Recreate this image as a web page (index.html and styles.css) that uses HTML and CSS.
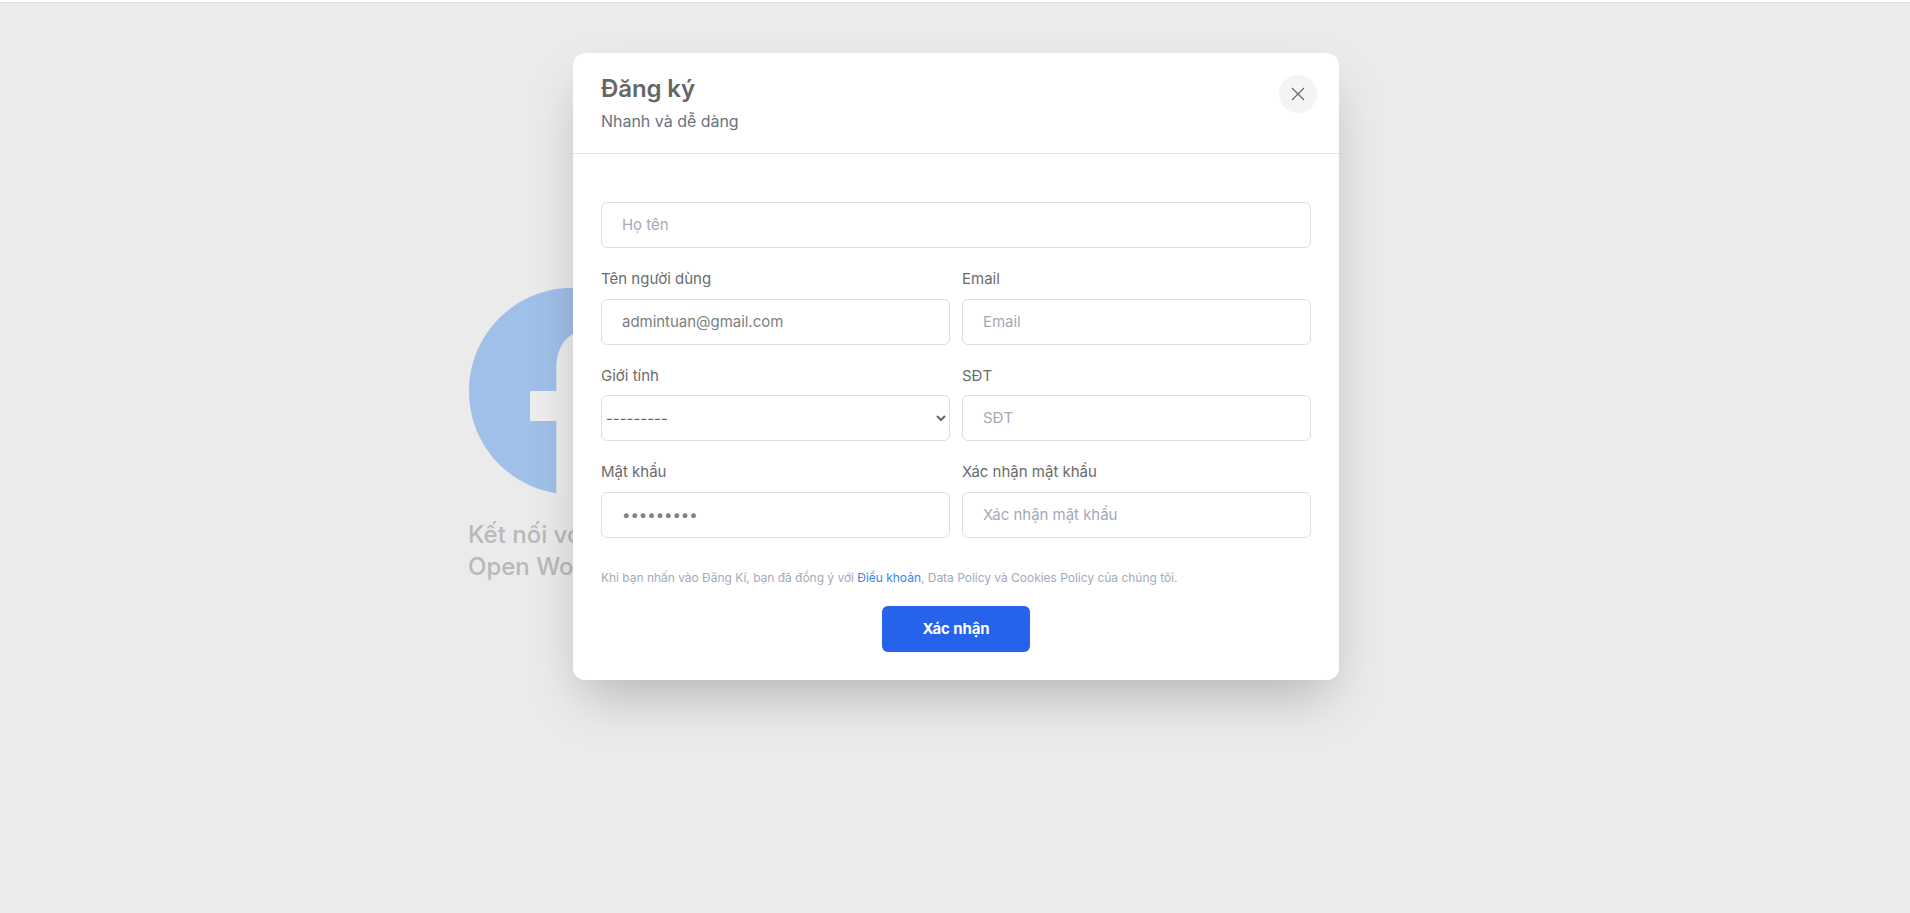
FILE: index.html
```
<!DOCTYPE html>
<html lang="vi">
<head>
<meta charset="utf-8">
<title>Đăng ký</title>
<link rel="stylesheet" href="styles.css">
</head>
<body>
<main class="landing">
  <div class="intro">
    <svg class="logo" viewBox="0 0 24 24" aria-hidden="true">
      <path class="logo-letter" d="M7 12H10V8L14 4L20 6V23.9H10.1V15.6H7z"/>
      <path class="logo-disc" d="M24 12.073c0-6.627-5.373-12-12-12s-12 5.373-12 12c0 5.99 4.388 10.954 10.125 11.854v-8.385H7.078v-3.47h3.047V9.43c0-3.007 1.792-4.669 4.533-4.669 1.312 0 2.686.235 2.686.235v2.953H15.83c-1.491 0-1.956.925-1.956 1.874v2.25h3.328l-.532 3.47h-2.796v8.385C19.612 23.027 24 18.062 24 12.073z"/>
    </svg>
    <p class="tagline">Kết nối với<br>Open World</p>
  </div>
</main>
<div class="overlay">
  <section class="modal">
    <header class="modal-head">
      <div>
        <h1 class="title">Đăng ký</h1>
        <p class="subtitle">Nhanh và dễ dàng</p>
      </div>
      <button class="close" type="button" aria-label="Đóng">
        <svg width="14" height="14" viewBox="0 0 14 14"><path d="M1 1L13 13M13 1L1 13"/></svg>
      </button>
    </header>
    <form class="form">
      <input class="control" type="text" placeholder="Họ tên">
      <div class="grid">
        <div class="field"><label class="label">Tên người dùng</label><input class="control" type="text" value="admintuan@gmail.com"></div>
        <div class="field"><label class="label">Email</label><input class="control" type="text" placeholder="Email"></div>
        <div class="field"><label class="label label-tight">Giới tính</label><select class="control select"><option>---------</option></select></div>
        <div class="field"><label class="label label-tight">SĐT</label><input class="control" type="text" placeholder="SĐT"></div>
        <div class="field"><label class="label">Mật khẩu</label><input class="control" type="password" value="123456789"></div>
        <div class="field"><label class="label">Xác nhận mật khẩu</label><input class="control" type="password" placeholder="Xác nhận mật khẩu"></div>
      </div>
      <p class="terms">Khi bạn nhấn vào Đăng Kí, bạn đã đồng ý với <a class="link">Điều khoản</a>, Data Policy và Cookies Policy của chúng tôi.</p>
      <button class="submit" type="button">Xác nhận</button>
    </form>
  </section>
</div>
</body>
</html>
```
FILE: styles.css
```
* { box-sizing: border-box; }
body { margin: 0; height: 913px; overflow: hidden; background: #ebebeb; border-top: 2px solid #fff; font-family: Inter, "Noto Sans", sans-serif; color: #666; }
.landing { border-top: 1px solid #dfdfdf; padding: 284px 0 0 468px; }
.logo { display: block; width: 207px; height: 207px; margin-left: .5px; }
.logo-disc { fill: #a0c0e9; }
.logo-letter { fill: #ededed; }
.tagline { margin: 25px 0 0; font-size: 24px; line-height: 32px; color: #b9b9b9; font-weight: 450; }
.overlay { position: absolute; inset: 0; display: flex; justify-content: center; align-items: flex-start; padding: 53px 0 0 2px; }
.modal { width: 766px; height: 627px; background: #fff; border-radius: 12px; box-shadow: 0 25px 50px -12px rgba(0,8,4,.25); }
.modal-head { display: flex; justify-content: space-between; height: 101px; padding: 22px 22px 0 28px; border-bottom: 1px solid #e5e5e5; }
.title { margin: 0; font-size: 24px; line-height: 28px; font-weight: 600; letter-spacing: -.1px; }
.subtitle { margin: 6px 0 0; font-size: 16px; line-height: 24px; color: #6b7280; letter-spacing: -.02px; }
.close { width: 38px; height: 38px; padding: 0; border: 0; border-radius: 50%; background: #f3f4f6; display: grid; place-items: center; }
.close path { stroke: #666; stroke-width: 1.1; fill: none; }
.form { display: flex; flex-direction: column; padding: 48px 28px 0; }
.control { width: 100%; height: 46px; padding: 0 20px 2px; border: 1px solid #dfdfdf; border-radius: 6px; background: #fff; color: #808080; font: 15px Inter, "Noto Sans", sans-serif; letter-spacing: -.03px; outline: 0; }
.control::placeholder { color: #a3aab8; }
.select { padding: 0; color: #666; }
.grid { display: grid; grid-template-columns: 1fr 1fr; gap: 20px 12px; margin-top: 20px; }
.label { display: block; height: 31px; line-height: 21px; font-size: 15px; color: #6b6b6b; }
.label-tight { height: 30px; }
.terms { margin: 31px 0 0; font-size: 12px; line-height: 18px; color: #a3aab8; letter-spacing: -.022px; }
.link { color: #3b82f6; }
.submit { align-self: center; width: 148px; height: 46px; margin-top: 19px; padding-bottom: 2px; border: 0; border-radius: 6px; background: #2563eb; color: #fff; font: 700 15px Inter, sans-serif; letter-spacing: -.1px; }
```
